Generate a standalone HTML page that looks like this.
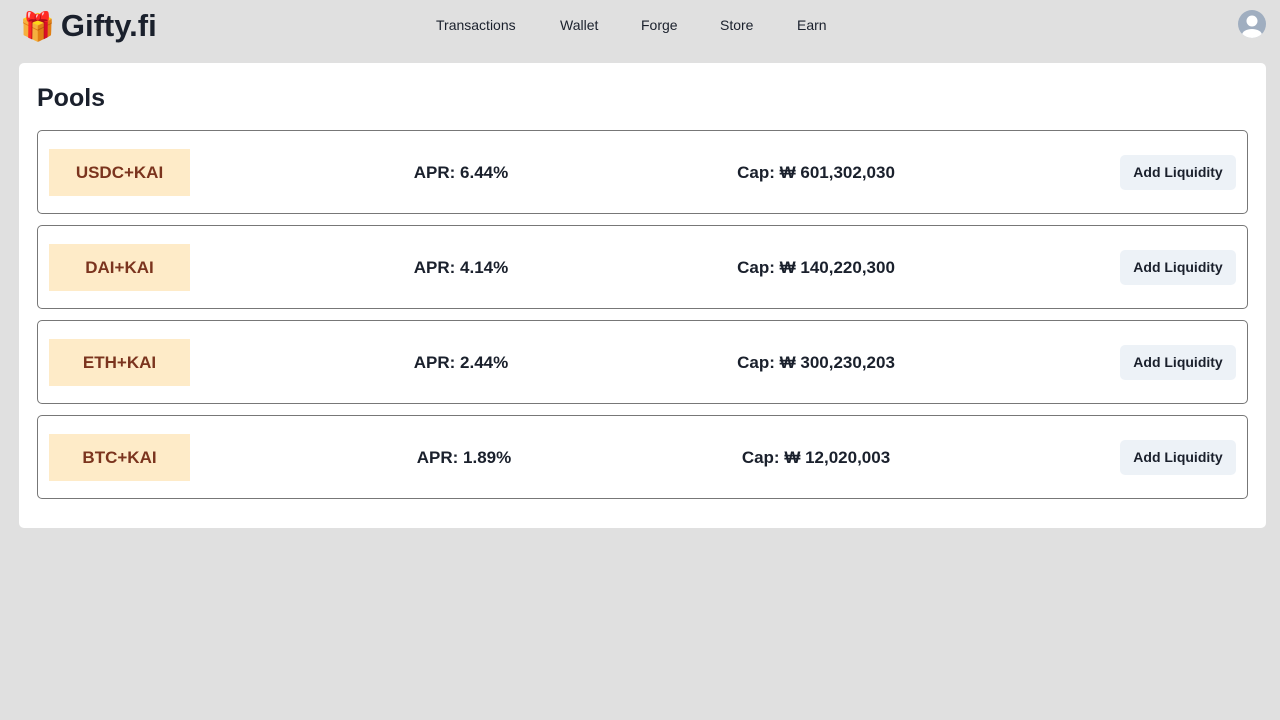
<!DOCTYPE html>
<html><head><style>
*{box-sizing:border-box;margin:0;padding:0}
body{width:1280px;height:720px;background:#e0e0e0;font-family:"Liberation Sans",sans-serif;color:#1a202c;position:relative;overflow:hidden}
.logo{position:absolute;left:20px;top:8px;font-size:31px;font-weight:bold;display:flex;align-items:center;gap:6px;color:#1a202c}
.nav a{position:absolute;top:17px;font-size:14px;color:#1a202c;text-decoration:none}
.av{position:absolute;left:1238px;top:10px;width:28px;height:28px;border-radius:50%;background:#a0aec0;overflow:hidden}
.card{position:absolute;left:19px;top:63px;width:1247px;height:465px;background:#fff;border-radius:5px}
h1{position:absolute;left:18px;top:21px;font-size:25px;font-weight:bold}
.row{position:absolute;left:18px;width:1211px;height:84px;border:1px solid #777;border-radius:5px}
.tag{position:absolute;left:11px;top:18px;width:141px;height:47px;background:#feebc8;color:#7b341e;font-weight:bold;font-size:17px;display:flex;align-items:center;justify-content:center}
.apr,.cap{position:absolute;top:32px;font-size:17px;font-weight:bold;transform:translateX(-50%);white-space:nowrap}
.apr{left:423px}.cap{left:778px}
.btn{position:absolute;right:11px;top:24px;width:116px;height:35px;background:#edf2f7;border-radius:5px;font-size:14px;font-weight:bold;display:flex;align-items:center;justify-content:center;padding-bottom:2px}
</style></head><body>
<div class="logo"><span style="font-size:28px">🎁</span>Gifty.fi</div>
<div class="nav"><a style="left:436px">Transactions</a><a style="left:560px">Wallet</a><a style="left:641px">Forge</a><a style="left:720px">Store</a><a style="left:797px">Earn</a></div>
<div class="av"><svg width="28" height="28" viewBox="0 0 28 28"><circle cx="14" cy="11" r="5.5" fill="#fff"/><ellipse cx="14" cy="25" rx="10" ry="6" fill="#fff"/></svg></div>
<div class="card"><h1>Pools</h1>
<div class="row" style="top:67px"><div class="tag">USDC+KAI</div><div class="apr">APR: 6.44%</div><div class="cap">Cap: ₩ 601,302,030</div><div class="btn">Add Liquidity</div></div>
<div class="row" style="top:162px"><div class="tag">DAI+KAI</div><div class="apr">APR: 4.14%</div><div class="cap">Cap: ₩ 140,220,300</div><div class="btn">Add Liquidity</div></div>
<div class="row" style="top:257px"><div class="tag">ETH+KAI</div><div class="apr">APR: 2.44%</div><div class="cap">Cap: ₩ 300,230,203</div><div class="btn">Add Liquidity</div></div>
<div class="row" style="top:352px"><div class="tag">BTC+KAI</div><div class="apr" style="left:426px">APR: 1.89%</div><div class="cap">Cap: ₩ 12,020,003</div><div class="btn">Add Liquidity</div></div>
</div>
</body></html>
